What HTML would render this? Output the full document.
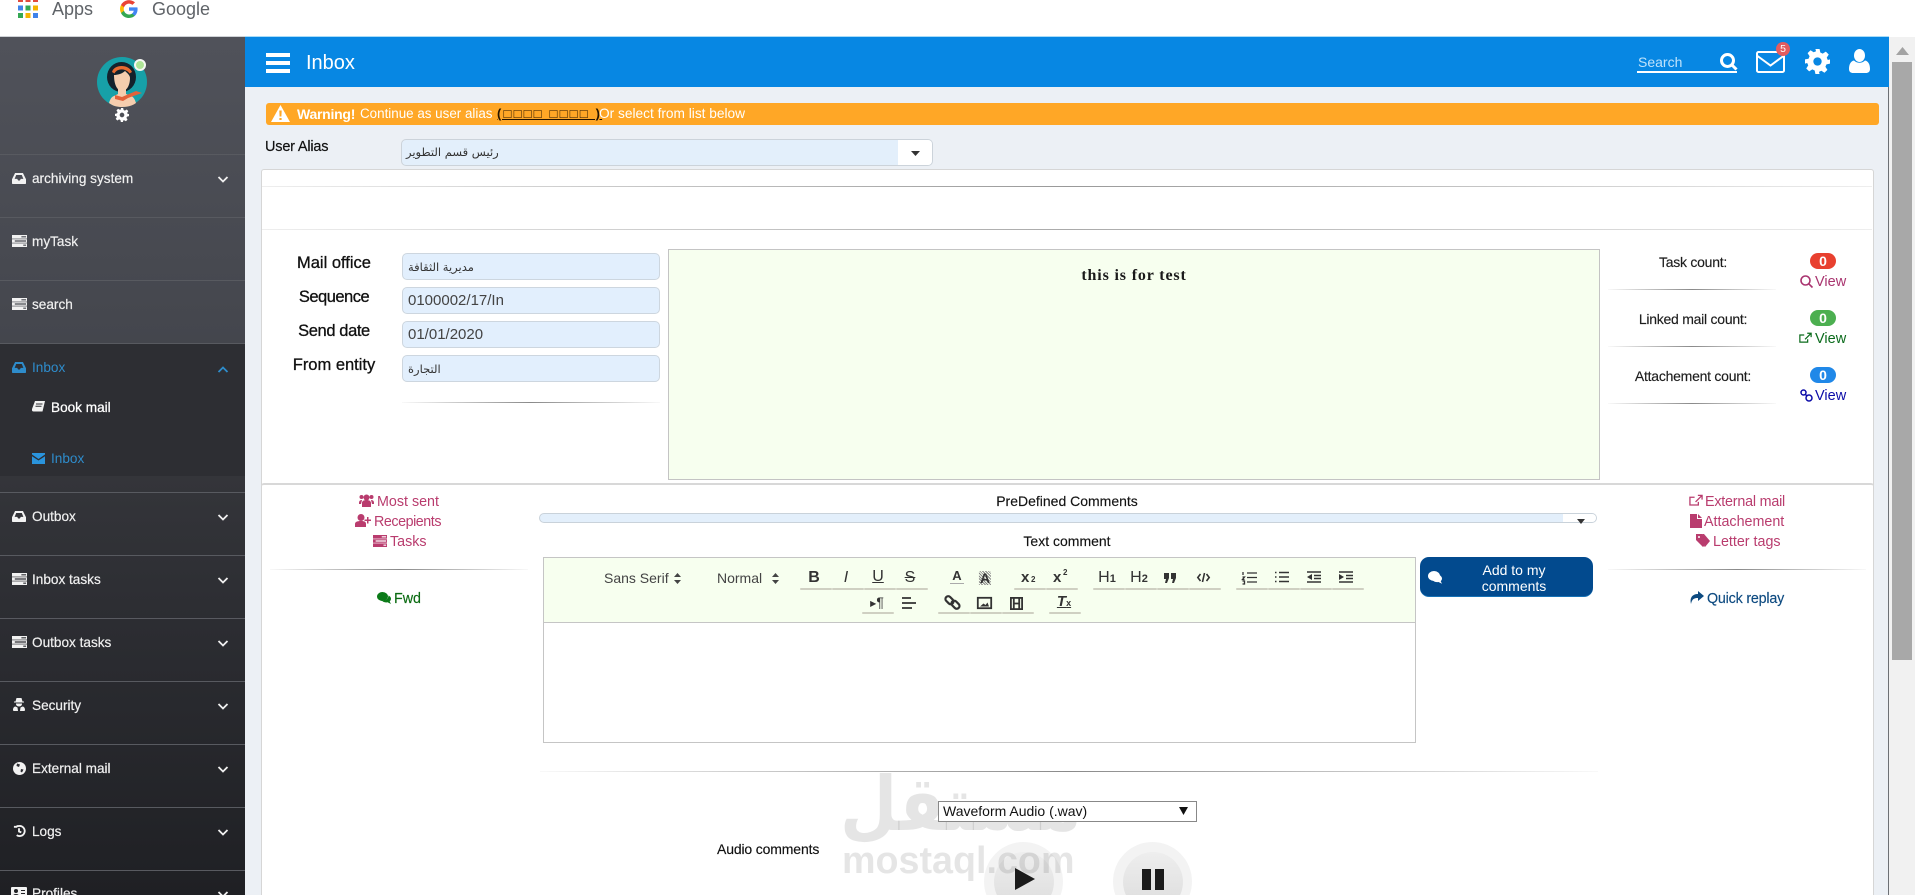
<!DOCTYPE html>
<html lang="en"><head><meta charset="utf-8"><title>Inbox</title>
<style>
html,body{margin:0;padding:0;width:1915px;height:895px;overflow:hidden;background:#fff;font-family:"Liberation Sans","DejaVu Sans",sans-serif}
#root{position:relative;width:1915px;height:895px;overflow:hidden}
.a,.t{position:absolute}
.t{white-space:nowrap;line-height:20px}
.c{transform:translateX(-50%)}
svg{position:absolute;overflow:visible}
.hr{position:absolute;height:1px;background:linear-gradient(to right,rgba(130,130,130,.05),#8a8a8a 50%,rgba(130,130,130,.05))}
.div{position:absolute;left:0;width:245px;height:1px;background:#585a60}
.m{color:#f0f0f0;font-size:13.6px;left:32px;-webkit-text-stroke:.2px #f0f0f0;margin-top:1px}
.ic{left:12px;fill:#f2f2f2}
.ch{left:218px;fill:none;stroke:#f0f0f0;stroke-width:1.8;margin-top:1px}
.lb{font-size:16.5px;color:#111;-webkit-text-stroke:.3px #111;margin-top:1px}
.inp{position:absolute;left:402px;width:256px;height:25px;background:#e2effd;border:1px solid #cdd6df;border-radius:5px;font-size:15px;color:#444;line-height:25px;text-indent:5px;box-sizing:content-box}
.ar{font-size:11.5px;font-family:"DejaVu Sans",sans-serif;color:#333}
.k{font-size:14px;letter-spacing:-.25px;color:#1d1d1d;margin-top:1px;-webkit-text-stroke:.15px #1d1d1d}
.lk{font-size:14.3px;color:#b93c6e;margin-top:1px}
.bd{position:absolute;left:1810px;width:26px;height:16px;border-radius:8px;color:#fff;font:bold 14px/16px "Liberation Sans",sans-serif;text-align:center}
.ul{position:absolute;height:2px;width:32px;background:#cfd0c2;border-radius:2px}
.tb{font-size:15px;color:#333;line-height:20px}
.q{stroke:#333;stroke-width:1.6;fill:none}
</style></head><body><div id="root">

<!-- browser bookmarks bar -->
<svg style="left:18px;top:-2px" width="20" height="20">
<rect x="0" y="0" width="5" height="4" fill="#e14b3d"/><rect x="7.5" y="0" width="5" height="4" fill="#e14b3d"/><rect x="15" y="0" width="5" height="4" fill="#e14b3d"/>
<rect x="0" y="7.5" width="5" height="5" fill="#3f83ea"/><rect x="7.5" y="7.5" width="5" height="5" fill="#34a853"/><rect x="15" y="7.5" width="5" height="5" fill="#f5b400"/>
<rect x="0" y="15" width="5" height="5" fill="#34a853"/><rect x="7.5" y="15" width="5" height="5" fill="#f5b400"/><rect x="15" y="15" width="5" height="5" fill="#3f83ea"/>
</svg>
<div class="t" style="left:52px;top:-1px;font-size:18px;color:#5f6368">Apps</div>
<svg style="left:120px;top:0" width="18" height="18" viewBox="0 0 18 18">
<path d="M17.6 9.2c0-.6-.1-1.200-.2-1.800H9v3.400h4.800a4.100 4.100 0 0 1-1.800 2.700v2.200h2.900c1.700-1.600 2.700-3.800 2.700-6.500z" fill="#4285f4"/>
<path d="M9 18c2.400 0 4.500-.8 5.900-2.200L12 13.600c-.8.500-1.800.9-3 .9-2.300 0-4.300-1.600-5-3.700H1v2.300A9 9 0 0 0 9 18z" fill="#34a853"/>
<path d="M4 10.700a5.400 5.400 0 0 1 0-3.400V5H1a9 9 0 0 0 0 8z" fill="#fbbc05"/>
<path d="M9 3.600c1.300 0 2.500.4 3.400 1.300L15 2.400A9 9 0 0 0 1 5l3 2.300c.7-2.100 2.700-3.700 5-3.700z" fill="#ea4335"/>
</svg>
<div class="t" style="left:152px;top:-1px;font-size:18px;color:#5f6368">Google</div>

<!-- sidebar -->
<div class="a" style="left:0;top:36px;width:245px;height:1px;background:#cfd2d6"></div>
<div class="a" style="left:0;top:37px;width:245px;height:306px;background:linear-gradient(to bottom,#50525a,#44464d)"></div>
<div class="a" style="left:0;top:343px;width:245px;height:133px;background:#2d2e33"></div>
<div class="a" style="left:0;top:476px;width:245px;height:419px;background:linear-gradient(to bottom,#34353a,#2c2d32 35%,#1f2024)"></div>
<div class="div" style="top:154px"></div><div class="div" style="top:217px"></div><div class="div" style="top:280px"></div><div class="div" style="top:343px"></div><div class="div" style="top:492px"></div><div class="div" style="top:555px"></div><div class="div" style="top:618px"></div><div class="div" style="top:681px"></div><div class="div" style="top:744px"></div><div class="div" style="top:807px"></div><div class="div" style="top:870px"></div>

<!-- avatar -->
<svg style="left:97px;top:57px" width="50" height="50" viewBox="0 0 50 50">
<circle cx="25" cy="25" r="25" fill="#17a0a8"/>
<ellipse cx="24.500" cy="20" rx="14.500" ry="15" fill="#14222c"/>
<path d="M15 15C17 7 32 7 35 15l-2.500 1.500C29 11 20 11 17.500 16.500z" fill="#e56a30"/>
<path d="M17 18c3 0 8-1 11-4 2 2 5 4 5 7 0 7-3 13-8 13s-8-7-8-16z" fill="#f5cdae"/>
<path d="M21 30h8v7l5 2c3 1 4 4 5 7-4 3-9 4-14 4s-9-1-13-4c1-3 2-6 5-7l4-2z" fill="#f5cdae"/>
<path d="M18 38l7 2 14-6 6 2-14 5-5 3-8-2z" fill="#e2623a"/>
</svg>
<div class="a" style="left:134px;top:59px;width:8px;height:8px;border-radius:50%;background:#aee596;border:2.500px solid #f6f8f4"></div>
<svg style="left:115px;top:108px" width="14" height="14" viewBox="0 0 24 24"><path fill="#fff" fill-rule="evenodd" d="M10 0h4l.7 3.400 2.300 1 3-1.900 2.800 2.800-1.900 3 1 2.300L24 10v4l-3.400.7-1 2.300 1.900 3-2.800 2.800-3-1.900-2.300 1L14 24h-4l-.7-3.400-2.300-1-3 1.900-2.800-2.800 1.900-3-1-2.300L0 14v-4l3.400-.7 1-2.300-1.900-3L5.300 1.200l3 1.900 2.300-1zM12 8a4 4 0 1 0 0 8 4 4 0 0 0 0-8z"/></svg>

<!-- sidebar menu -->
<svg class="ic" style="top:173px" width="14" height="11" viewBox="0 0 16 14" preserveAspectRatio="none"><path fill-rule="evenodd" d="M3.500 0h9L16 8v5a1 1 0 0 1-1 1H1a1 1 0 0 1-1-1V8zM4.800 2.500 3 7.500h3l1 2h2l1-2h3l-1.800-5z"/></svg>
<div class="t m" style="top:168px">archiving system</div>
<svg class="ch" style="top:175px" width="10" height="7"><path d="M0.500 1l4.500 4.500L9.500 1"/></svg>

<svg class="ic" style="top:235px" width="15" height="12" viewBox="0 0 16 14" preserveAspectRatio="none"><path fill-rule="evenodd" d="M0 0h16v4.200H0zM0 4.900h16v4.200H0zM0 9.800h16V14H0zM10 1.400v1.400h5V1.400zM3 6.300v1.400h12V6.300zM12 11.200v1.400h3v-1.400z"/></svg>
<div class="t m" style="top:231px">myTask</div>

<svg class="ic" style="top:298px" width="15" height="12" viewBox="0 0 16 14" preserveAspectRatio="none"><path fill-rule="evenodd" d="M0 0h16v4.200H0zM0 4.900h16v4.200H0zM0 9.800h16V14H0zM10 1.400v1.400h5V1.400zM3 6.300v1.400h12V6.300zM12 11.200v1.400h3v-1.400z"/></svg>
<div class="t m" style="top:294px">search</div>

<svg class="ic" style="top:362px;fill:#2e8ccb" width="14" height="11" viewBox="0 0 16 14" preserveAspectRatio="none"><path fill-rule="evenodd" d="M3.500 0h9L16 8v5a1 1 0 0 1-1 1H1a1 1 0 0 1-1-1V8zM4.800 2.500 3 7.500h3l1 2h2l1-2h3l-1.800-5z"/></svg>
<div class="t m" style="top:357px;color:#2e8ccb;-webkit-text-stroke:0">Inbox</div>
<svg class="ch" style="top:365px;stroke:#2e8ccb" width="10" height="7"><path d="M0.500 6L5 1.500 9.500 6"/></svg>

<svg class="a" style="left:32px;top:401px" width="13" height="12" viewBox="0 0 13 12"><path fill="#f2f2f2" d="M3 0h10l-2.500 10.500H1.500C0 10.500-.3 9 .2 7.500zM4 2.500v1h6.500v-1zM3.500 4.700v1h6v-1z"/></svg>
<div class="t m" style="left:51px;top:397px;-webkit-text-stroke:.25px #fff;color:#fff">Book mail</div>

<svg class="a" style="left:32px;top:453px" width="13" height="11" viewBox="0 0 13 11"><path fill="#2a94dd" d="M0 0h13v1.500L6.500 6 0 1.500zM0 3.200 6.500 7.500 13 3.200V11H0z"/></svg>
<div class="t" style="left:51px;top:449px;font-size:13.6px;color:#2e8ccb">Inbox</div>

<svg class="ic" style="top:511px" width="14" height="11" viewBox="0 0 16 14" preserveAspectRatio="none"><path fill-rule="evenodd" d="M3.500 0h9L16 8v5a1 1 0 0 1-1 1H1a1 1 0 0 1-1-1V8zM4.800 2.500 3 7.500h3l1 2h2l1-2h3l-1.800-5z"/></svg>
<div class="t m" style="top:506px">Outbox</div>
<svg class="ch" style="top:513px" width="10" height="7"><path d="M0.500 1l4.500 4.500L9.500 1"/></svg>

<svg class="ic" style="top:573px" width="15" height="12" viewBox="0 0 16 14" preserveAspectRatio="none"><path fill-rule="evenodd" d="M0 0h16v4.200H0zM0 4.900h16v4.200H0zM0 9.800h16V14H0zM10 1.400v1.400h5V1.400zM3 6.300v1.400h12V6.300zM12 11.200v1.400h3v-1.400z"/></svg>
<div class="t m" style="top:569px">Inbox tasks</div>
<svg class="ch" style="top:576px" width="10" height="7"><path d="M0.500 1l4.500 4.500L9.500 1"/></svg>

<svg class="ic" style="top:636px" width="15" height="12" viewBox="0 0 16 14" preserveAspectRatio="none"><path fill-rule="evenodd" d="M0 0h16v4.200H0zM0 4.900h16v4.200H0zM0 9.800h16V14H0zM10 1.400v1.400h5V1.400zM3 6.300v1.400h12V6.300zM12 11.200v1.400h3v-1.400z"/></svg>
<div class="t m" style="top:632px">Outbox tasks</div>
<svg class="ch" style="top:639px" width="10" height="7"><path d="M0.500 1l4.500 4.500L9.500 1"/></svg>

<svg class="ic" style="top:698px;left:13px" width="12" height="13" viewBox="0 0 12 13"><path fill-rule="evenodd" d="M3.500 0h5l1 3.500H11v1H1v-1h1.500zM3 5.500h6c.2 1.500-1 3-3 3s-3.200-1.500-3-3zM2.500 8.500L4.500 9.500 5 13H1c-1 0-1-1-1-1 0-2 1-3.500 2.500-3.500zM9.500 8.500c1.500 0 2.500 1.500 2.500 3.500 0 0 0 1-1 1H7l.5-3.500z"/></svg>
<div class="t m" style="top:695px">Security</div>
<svg class="ch" style="top:702px" width="10" height="7"><path d="M0.500 1l4.500 4.500L9.500 1"/></svg>

<svg class="ic" style="top:762px;left:13px" width="13" height="13" viewBox="0 0 13 13"><circle cx="6.500" cy="6.500" r="6.500"/><path fill="#2a2b30" d="M4 1.500l3 1-1 2.500-2.500-1zM8 7l2.500.5L9 10.500 7.500 9.500z"/></svg>
<div class="t m" style="top:758px">External mail</div>
<svg class="ch" style="top:765px" width="10" height="7"><path d="M0.500 1l4.500 4.500L9.500 1"/></svg>

<svg class="ic" style="top:825px;left:13px;fill:none;stroke:#f2f2f2;stroke-width:2" width="12" height="12" viewBox="0 0 13 13"><path d="M1 2h3.500M4 1.500C5 1 6 1 7 1a5.500 5.500 0 1 1-3 10M6.500 3.500v3.500l2.500 1"/></svg>
<div class="t m" style="top:821px">Logs</div>
<svg class="ch" style="top:828px" width="10" height="7"><path d="M0.500 1l4.500 4.500L9.500 1"/></svg>

<svg class="ic" style="top:887px;left:11px" width="16" height="12" viewBox="0 0 16 12"><path fill-rule="evenodd" d="M1 0h14a1 1 0 0 1 1 1v10a1 1 0 0 1-1 1H1a1 1 0 0 1-1-1V1a1 1 0 0 1 1-1zM5 2a2 2 0 1 0 0 4 2 2 0 0 0 0-4zM2 9v1h6V9c0-1-1-2-3-2S2 8 2 9zM10 3v1h4V3zM10 6v1h4V6z"/></svg>
<div class="t m" style="top:883px">Profiles</div>
<svg class="ch" style="top:890px" width="10" height="7"><path d="M0.500 1l4.500 4.500L9.500 1"/></svg>

<!-- content background -->
<div class="a" style="left:245px;top:87px;width:1643px;height:808px;background:#ecf0f5"></div>
<div class="a" style="left:1888px;top:87px;width:1px;height:808px;background:#6d7075"></div>

<!-- header -->
<div class="a" style="left:245px;top:37px;width:1644px;height:50px;background:#0787e3"></div>
<div class="a" style="left:245px;top:36px;width:1644px;height:1px;background:#a8dcf8"></div>
<div class="a" style="left:266px;top:53px;width:24px;height:4px;background:#fff"></div>
<div class="a" style="left:266px;top:61px;width:24px;height:4px;background:#fff"></div>
<div class="a" style="left:266px;top:69px;width:24px;height:4px;background:#fff"></div>
<div class="t" style="left:306px;top:53px;font-size:20px;color:#fff">Inbox</div>
<div class="t" style="left:1638px;top:52px;font-size:14px;color:#bfe3fb">Search</div>
<div class="a" style="left:1637px;top:71px;width:100px;height:2px;background:#fff"></div>
<svg style="left:1720px;top:53px" width="18" height="18" viewBox="0 0 18 18" fill="none" stroke="#fff" stroke-width="3"><circle cx="7.500" cy="7.500" r="6"/><path d="M11.500 11.500L16.500 16.500"/></svg>
<svg style="left:1756px;top:51px" width="29" height="22" viewBox="0 0 29 22" fill="none" stroke="#fff" stroke-width="2"><rect x="1" y="1" width="27" height="20" rx="1.500"/><path d="M1.500 5L14.500 14.500 27.500 5"/></svg>
<div class="a" style="left:1776px;top:42px;width:14px;height:14px;border-radius:50%;background:#e25c60;color:#fff;font-size:10.500px;line-height:14px;text-align:center">5</div>
<svg style="left:1805px;top:49px" width="25" height="25" viewBox="0 0 24 24"><path fill="#fff" fill-rule="evenodd" d="M10 0h4l.7 3.400 2.300 1 3-1.900 2.800 2.800-1.900 3 1 2.300L24 10v4l-3.400.7-1 2.300 1.900 3-2.800 2.800-3-1.900-2.300 1L14 24h-4l-.7-3.400-2.300-1-3 1.900-2.800-2.800 1.900-3-1-2.300L0 14v-4l3.400-.7 1-2.300-1.900-3L5.300 1.200l3 1.900 2.300-1zM12 8a4 4 0 1 0 0 8 4 4 0 0 0 0-8z"/></svg>
<svg style="left:1849px;top:49px" width="21" height="24" viewBox="0 0 21 24"><ellipse cx="10.500" cy="6.500" rx="5.500" ry="6.500" fill="#fff"/><path d="M0 20c0-5 2-8 5-8.500 3 3 8 3 11 0 3 .5 5 3.500 5 8.500 0 3-2 4-4 4H4c-2 0-4-1-4-4z" fill="#fff"/></svg>

<!-- scrollbar -->
<div class="a" style="left:1889px;top:37px;width:26px;height:858px;background:#f1f1f1"></div>
<div class="a" style="left:1892px;top:62px;width:20px;height:598px;background:#a8a8a8"></div>
<svg style="left:1896px;top:47px" width="13" height="8"><path d="M6.500 0L13 8H0z" fill="#a3a3a3"/></svg>

<!-- warning -->
<div class="a" style="left:266px;top:103px;width:1613px;height:22px;background:#ffa726;border-radius:3px"></div>
<svg style="left:271px;top:105px" width="19" height="17" viewBox="0 0 19 17"><path fill="#fff" fill-rule="evenodd" d="M9.500 0l9.500 17H0zM8.300 5.500l.3 6h1.800l.3-6zM8.400 13v2h2.200v-2z"/></svg>
<div class="t" style="left:297px;top:104px;font-size:14px;color:#fff;font-weight:bold;letter-spacing:-.25px">Warning!</div>
<div class="t" style="left:360px;top:104px;font-size:13.4px;color:#fff">Continue as user alias</div>
<div class="t" style="left:497px;top:104px;font-size:13px;color:#241400;text-decoration:underline;font-weight:bold;letter-spacing:2.2px;white-space:pre">(□□□□ □□□□ )</div>
<div class="t" style="left:599px;top:104px;font-size:13.7px;color:#fff">Or select from list below</div>

<!-- user alias -->
<div class="t" style="left:265px;top:137px;color:#111;font-size:14.5px;letter-spacing:-.2px;-webkit-text-stroke:.2px #111">User Alias</div>
<div class="a" style="left:401px;top:139px;width:530px;height:25px;background:#e3effb;border:1px solid #ccd3da;border-radius:5px;overflow:hidden"><div class="a" style="right:0;top:0;width:34px;height:25px;background:#fff"></div></div>
<svg style="left:911px;top:151px" width="9" height="5"><path d="M0 0h9L4.500 5z" fill="#333"/></svg>
<div class="t ar" style="left:406px;top:142px">رئيس قسم التطوير</div>

<!-- panels -->
<div class="a" style="left:261px;top:169px;width:1611px;height:314px;background:#fff;border:1px solid #d6d6d6;border-radius:3px 3px 0 0"></div>
<div class="a" style="left:261px;top:483px;width:1611px;height:420px;background:#fff;border:1px solid #d6d6d6;border-top:2px solid #d8d8d8;border-radius:3px 3px 0 0"></div>
<div class="hr" style="left:262px;top:186px;width:1610px;background:linear-gradient(to right,#eee,#999 50%,#eee)"></div>
<div class="hr" style="left:262px;top:229px;width:1610px;background:linear-gradient(to right,#eee,#aaa 50%,#eee)"></div>

<!-- fields -->
<div class="t c lb" style="left:334px;top:252px">Mail office</div>
<div class="t c lb" style="left:334px;top:286px;letter-spacing:-.5px">Sequence</div>
<div class="t c lb" style="left:334px;top:320px;letter-spacing:-.4px">Send date</div>
<div class="t c lb" style="left:334px;top:354px">From entity</div>
<div class="inp" style="top:253px"><span class="ar">مديرية الثقافة</span></div>
<div class="inp" style="top:287px">0100002/17/In</div>
<div class="inp" style="top:321px">01/01/2020</div>
<div class="inp" style="top:355px"><span class="ar">التجارة</span></div>
<div class="hr" style="left:402px;top:402px;width:258px"></div>

<!-- message -->
<div class="a" style="left:668px;top:249px;width:930px;height:229px;background:#f7ffef;border:1px solid #c4c4c4"></div>
<div class="t c" style="left:1134px;top:266px;font:bold 16px/20px 'Liberation Serif',serif;letter-spacing:.85px;color:#1a1a1a">this is for test</div>

<!-- counts -->
<div class="t c k" style="left:1693px;top:251px">Task count:</div>
<div class="hr" style="left:1608px;top:289px;width:168px"></div>
<div class="t c k" style="left:1693px;top:308px">Linked mail count:</div>
<div class="hr" style="left:1608px;top:346px;width:168px"></div>
<div class="t c k" style="left:1693px;top:365px">Attachement count:</div>
<div class="hr" style="left:1608px;top:403px;width:168px"></div>
<div class="bd" style="top:253px;background:#e8402f">0</div>
<div class="bd" style="top:310px;background:#4caf50">0</div>
<div class="bd" style="top:367px;background:#2088e8">0</div>
<svg style="left:1800px;top:275px" width="13" height="13" viewBox="0 0 13 13" fill="none" stroke="#a9346f" stroke-width="1.600"><circle cx="5.500" cy="5.500" r="4.500"/><path d="M8.800 8.800L12.500 12.500"/></svg>
<div class="t" style="left:1815px;top:272px;font-size:14.5px;color:#a9346f">View</div>
<svg style="left:1799px;top:332px" width="13" height="12" viewBox="0 0 15 13" fill="none" stroke="#0b6b1c" stroke-width="1.400"><path d="M10 8v3.300H1V3h5M7 8l6.500-6.500M9.500 1H14v4.500"/></svg>
<div class="t" style="left:1815px;top:329px;font-size:14.5px;color:#0b6b1c">View</div>
<svg style="left:1800px;top:389px" width="13" height="13" viewBox="0 0 13 13" fill="none" stroke="#0b0ba8" stroke-width="1.500"><circle cx="3.500" cy="3.500" r="2.500"/><circle cx="9" cy="9" r="3"/><path d="M5 5l2 2"/></svg>
<div class="t" style="left:1815px;top:386px;font-size:14.5px;color:#0b0ba8">View</div>

<!-- left links -->
<svg style="left:359px;top:494px" width="15" height="13" viewBox="0 0 15 13" fill="#b93c6e"><circle cx="7.500" cy="3.500" r="3"/><circle cx="2.500" cy="3" r="2"/><circle cx="12.500" cy="3" r="2"/><path d="M3 13V9c0-2 2-3 4.500-3S12 7 12 9v4zM0 9c0-2 1-3 3-3L2 10H0zM15 9c0-2-1-3-3-3l1 4h2z"/></svg>
<div class="t lk" style="left:377px;top:491px">Most sent</div>
<svg style="left:355px;top:514px" width="16" height="13" viewBox="0 0 16 13" fill="#b93c6e"><circle cx="6" cy="3.500" r="3.500"/><path d="M0 13V10c0-2 2-3 6-3s5 1 5 3v3zM12 3h1.500v2.500H16V7h-2.500v2.500H12V7H9.500V5.500H12z"/></svg>
<div class="t lk" style="left:374px;top:511px;letter-spacing:-.45px">Recepients</div>
<svg style="left:373px;top:535px" width="14" height="12" viewBox="0 0 16 14" preserveAspectRatio="none" fill="#b93c6e"><path fill-rule="evenodd" d="M0 0h16v4.200H0zM0 4.900h16v4.200H0zM0 9.800h16V14H0zM10 1.400v1.400h5V1.400zM3 6.300v1.400h12V6.300zM12 11.200v1.400h3v-1.400z"/></svg>
<div class="t lk" style="left:390px;top:531px">Tasks</div>
<div class="hr" style="left:270px;top:569px;width:258px"></div>
<svg style="left:377px;top:592px" width="14" height="12" viewBox="0 0 14 12" fill="#0b7a18"><ellipse cx="5.500" cy="4.500" rx="5.500" ry="4.500"/><path d="M11.500 3.500c1.500.8 2.500 1.800 2.500 3.300 0 1.200-.6 2-1.300 2.700l1.300 2.500-3.500-1.700c-2 .5-4.500-.2-5.500-1.500 3.500 0 6.500-2 6.500-5.300z"/></svg>
<div class="t" style="left:394px;top:589px;font-size:14.300px;color:#0b6b12;-webkit-text-stroke:.15px #0b6b12">Fwd</div>

<!-- predefined -->
<div class="t c k" style="left:1067px;top:490px;color:#111;letter-spacing:0">PreDefined Comments</div>
<div class="a" style="left:539px;top:513px;width:1056px;height:8px;background:#e3effb;border:1px solid #c9d2da;border-radius:5px;overflow:hidden"><div class="a" style="right:0;top:0;width:33px;height:8px;background:#fff"></div></div>
<svg style="left:1577px;top:519px" width="8" height="5"><path d="M0 0h8L4 5z" fill="#333"/></svg>
<div class="t c k" style="left:1067px;top:530px;color:#111;letter-spacing:0">Text comment</div>

<!-- watermark logo, behind the select -->
<div class="t" style="left:840px;top:760px;font:bold 66px/90px 'DejaVu Sans',sans-serif;color:rgba(0,0,0,.1);direction:rtl;transform:scaleY(1.14)">مستقل</div>

<!-- editor -->
<div class="a" style="left:543px;top:557px;width:871px;height:64px;background:#f7ffef;border:1px solid #c5c5c5"></div>
<div class="a" style="left:543px;top:623px;width:871px;height:119px;background:#fff;border:1px solid #c5c5c5;border-top:0"></div>

<div class="t tb" style="left:604px;top:568px;font-size:14px;color:#444">Sans Serif</div>
<svg style="left:674px;top:573px" width="7" height="11"><path d="M3.500 0L7 4H0zM0 7h7l-3.500 4z" fill="#444"/></svg>
<div class="t tb" style="left:717px;top:568px;font-size:14px;color:#444">Normal</div>
<svg style="left:772px;top:573px" width="7" height="11"><path d="M3.500 0L7 4H0zM0 7h7l-3.500 4z" fill="#444"/></svg>

<div class="ul" style="left:800px;top:588px"></div><div class="ul" style="left:832px;top:588px"></div><div class="ul" style="left:864px;top:588px"></div><div class="ul" style="left:896px;top:588px"></div>
<div class="ul" style="left:1014px;top:588px"></div><div class="ul" style="left:1046px;top:588px"></div>
<div class="ul" style="left:1093px;top:588px"></div><div class="ul" style="left:1125px;top:588px"></div><div class="ul" style="left:1157px;top:588px"></div><div class="ul" style="left:1189px;top:588px"></div>
<div class="ul" style="left:1236px;top:588px"></div><div class="ul" style="left:1268px;top:588px"></div><div class="ul" style="left:1300px;top:588px"></div><div class="ul" style="left:1332px;top:588px"></div>
<div class="ul" style="left:862px;top:612px"></div><div class="ul" style="left:938px;top:612px"></div><div class="ul" style="left:970px;top:612px"></div><div class="ul" style="left:1002px;top:612px"></div><div class="ul" style="left:1049px;top:612px"></div>

<div class="t c tb" style="left:814px;top:568px;font-weight:bold;font-size:16px">B</div>
<div class="t c tb" style="left:846px;top:568px;font-style:italic;font-size:16px">I</div>
<div class="t c tb" style="left:878px;top:567px;text-decoration:underline;font-size:16px">U</div>
<div class="t c tb" style="left:910px;top:568px;text-decoration:line-through;font-size:16px">S</div>
<div class="t c tb" style="left:957px;top:566px;font-size:13px;font-weight:bold">A</div>
<div class="a" style="left:950px;top:583px;width:14px;height:1px;background:#aaa"></div>
<div class="t c tb" style="left:985px;top:571px;font-size:14px;font-weight:bold;background:repeating-linear-gradient(45deg,#888 0 1px,transparent 1px 2px);line-height:14px;padding:0 1px">A</div>
<div class="t tb" style="left:1021px;top:568px;font-weight:bold;font-size:15px">x</div><div class="t tb" style="left:1031px;top:575px;font-size:8px;font-weight:bold;line-height:10px">2</div>
<div class="t tb" style="left:1053px;top:568px;font-weight:bold;font-size:15px">x</div><div class="t tb" style="left:1063px;top:568px;font-size:8px;font-weight:bold;line-height:10px">2</div>
<div class="t c tb" style="left:1107px;top:568px;font-size:16px">H<span style="font-size:11px;font-weight:bold">1</span></div>
<div class="t c tb" style="left:1139px;top:568px;font-size:16px">H<span style="font-size:11px;font-weight:bold">2</span></div>
<svg style="left:1164px;top:573px" width="13" height="10"><path d="M0 0h5v5l-2 5H1l1-4H0zM7 0h5v5l-2 5H8l1-4H7z" fill="#333"/></svg>
<svg class="q" style="left:1197px;top:573px" width="13" height="9"><path d="M3.500 1L.8 4.500l2.700 3.500M9.500 1l2.700 3.500L9.500 8M7.500 0L5.500 9"/></svg>
<svg class="q" style="left:1242px;top:571px" width="15" height="13"><path d="M5 2h10M5 6.500h10M5 11h10M1 1v3M.5 6h2l-2 2.500h2M.5 10h2v3h-2" stroke-width="1.300"/></svg>
<svg class="q" style="left:1275px;top:571px" width="14" height="12"><path d="M0 1.500h1.500M4 1.500h10M0 6h1.500M4 6h10M0 10.500h1.500M4 10.500h10" stroke-width="1.500"/></svg>
<svg class="q" style="left:1307px;top:571px" width="14" height="12"><path d="M0 1h14M7 4.500h7M7 7.500h7M0 11h14" stroke-width="1.500"/><path d="M5 3v6L0 6z" fill="#333" stroke="none"/></svg>
<svg class="q" style="left:1339px;top:571px" width="14" height="12"><path d="M0 1h14M7 4.500h7M7 7.500h7M0 11h14" stroke-width="1.500"/><path d="M0 3v6l5-3z" fill="#333" stroke="none"/></svg>

<div class="t c tb" style="left:877px;top:592px;font-size:14px"><span style="font-size:8px;vertical-align:1px">▶</span>¶</div>
<svg class="q" style="left:902px;top:597px" width="14" height="12"><path d="M0 1h9M0 6h14M0 11h10" stroke-width="1.800"/></svg>
<svg class="q" style="left:945px;top:595px" width="15" height="15" viewBox="0 0 15 15"><g stroke-width="2.200"><rect x="0" y="2.500" width="9" height="5.500" rx="2.700" transform="rotate(45 4.500 5.200)"/><rect x="6" y="7" width="9" height="5.500" rx="2.700" transform="rotate(45 10.500 9.700)"/></g></svg>
<svg class="q" style="left:977px;top:597px" width="15" height="12"><rect x=".8" y=".8" width="13.400" height="10.400" stroke-width="1.800"/><path d="M3 9.500l3.500-3 2 1.500 2-2.500 1.500 4z" fill="#333" stroke="none"/></svg>
<svg class="q" style="left:1010px;top:597px" width="13" height="13"><rect x=".9" y=".9" width="11.200" height="11.200" stroke-width="1.800"/><path d="M3.800 1v11M9.200 1v11M4 6.500h5" stroke-width="1.800"/></svg>
<div class="t c tb" style="left:1064px;top:592px;font-style:italic;text-decoration:underline;font-family:'Liberation Sans',sans-serif;font-weight:bold;font-size:15px">T<span style="font-size:9px;font-weight:bold;font-style:normal">x</span></div>

<!-- add button -->
<div class="a" style="left:1420px;top:557px;width:173px;height:40px;background:#024a8e;border-radius:9px;border-bottom:1px solid #1572b7;box-sizing:border-box"></div>
<svg style="left:1428px;top:571px" width="14" height="13" viewBox="0 0 14 13" fill="#fff"><ellipse cx="6" cy="5" rx="6" ry="5"/><path d="M11.500 4c1.500 1 2.500 2 2.500 3.500 0 1.200-.6 2-1.300 2.700l1.300 2.500-3.500-1.700c-2 .5-4.500-.2-5.500-1.500 3.500 0 6.500-2 6.500-5.500z"/></svg>
<div class="t c" style="left:1514px;top:560px;font-size:14px;color:#fff">Add to my</div>
<div class="t c" style="left:1514px;top:576px;font-size:14px;color:#fff">comments</div>

<!-- right links -->
<svg style="left:1689px;top:494px" width="14" height="13" viewBox="0 0 15 13" fill="none" stroke="#b93c6e" stroke-width="1.400"><path d="M10 8v3.300H1V3h5M7 8l6.500-6.500M9.500 1H14v4.500"/></svg>
<div class="t lk" style="left:1705px;top:491px;letter-spacing:-.2px">External mail</div>
<svg style="left:1690px;top:514px" width="12" height="14" viewBox="0 0 12 14" fill="#b93c6e"><path d="M0 0h7v5h5v9H0zM8 0l4 4H8z"/></svg>
<div class="t lk" style="left:1704px;top:511px">Attachement</div>
<svg style="left:1696px;top:534px" width="14" height="14" viewBox="0 0 14 14" fill="#b93c6e"><path d="M0 0h6l7 7-6 6-7-7zM3 2a1 1 0 1 0 0 2 1 1 0 0 0 0-2z" fill-rule="evenodd"/><path d="M8 0l6 7-5 6-1-1 4-5-6-7z"/></svg>
<div class="t lk" style="left:1713px;top:531px">Letter tags</div>
<div class="hr" style="left:1608px;top:569px;width:258px"></div>
<svg style="left:1690px;top:591px" width="14" height="13" viewBox="0 0 14 13" fill="#0d4a80"><path d="M8 0l6 5-6 5V7C4 7 2 8 1 13-.5 7 2 3 8 3z"/></svg>
<div class="t" style="left:1707px;top:589px;font-size:14.300px;letter-spacing:-.2px;color:#0d4a80;-webkit-text-stroke:.15px #0d4a80">Quick replay</div>

<!-- audio -->
<div class="hr" style="left:540px;top:771px;width:1058px"></div>
<div class="t" style="left:717px;top:839px;font-size:14px;letter-spacing:-.15px;color:#111;-webkit-text-stroke:.15px #111">Audio comments</div>
<div class="a" style="left:938px;top:801px;width:257px;height:19px;background:#fff;border:1px solid #888;font-size:14px;line-height:19px;color:#111;text-indent:4px">Waveform Audio (.wav)</div>
<svg style="left:1179px;top:807px" width="9" height="8"><path d="M0 0h9L4.500 8z" fill="#111"/></svg>
<div class="a" style="left:984px;top:842px;width:79px;height:79px;border-radius:50%;background:#f3f3f3"></div>
<div class="a" style="left:994px;top:852px;width:60px;height:60px;border-radius:50%;background:linear-gradient(#eee,#dcdcdc)"></div>
<svg style="left:1015px;top:868px" width="20" height="22"><path d="M0 0L20 11 0 22z" fill="#1b1b1b"/></svg>
<div class="a" style="left:1113px;top:842px;width:79px;height:79px;border-radius:50%;background:#f3f3f3"></div>
<div class="a" style="left:1123px;top:852px;width:60px;height:60px;border-radius:50%;background:linear-gradient(#eee,#dcdcdc)"></div>
<div class="a" style="left:1142px;top:869px;width:9px;height:21px;background:#1b1b1b"></div>
<div class="a" style="left:1155px;top:869px;width:9px;height:21px;background:#1b1b1b"></div>

<!-- watermark text -->
<div class="t" style="left:842px;top:840px;font:bold 37.700px/40px 'Liberation Sans',sans-serif;color:rgba(0,0,0,.1)">mostaql.com</div>

</div></body></html>
